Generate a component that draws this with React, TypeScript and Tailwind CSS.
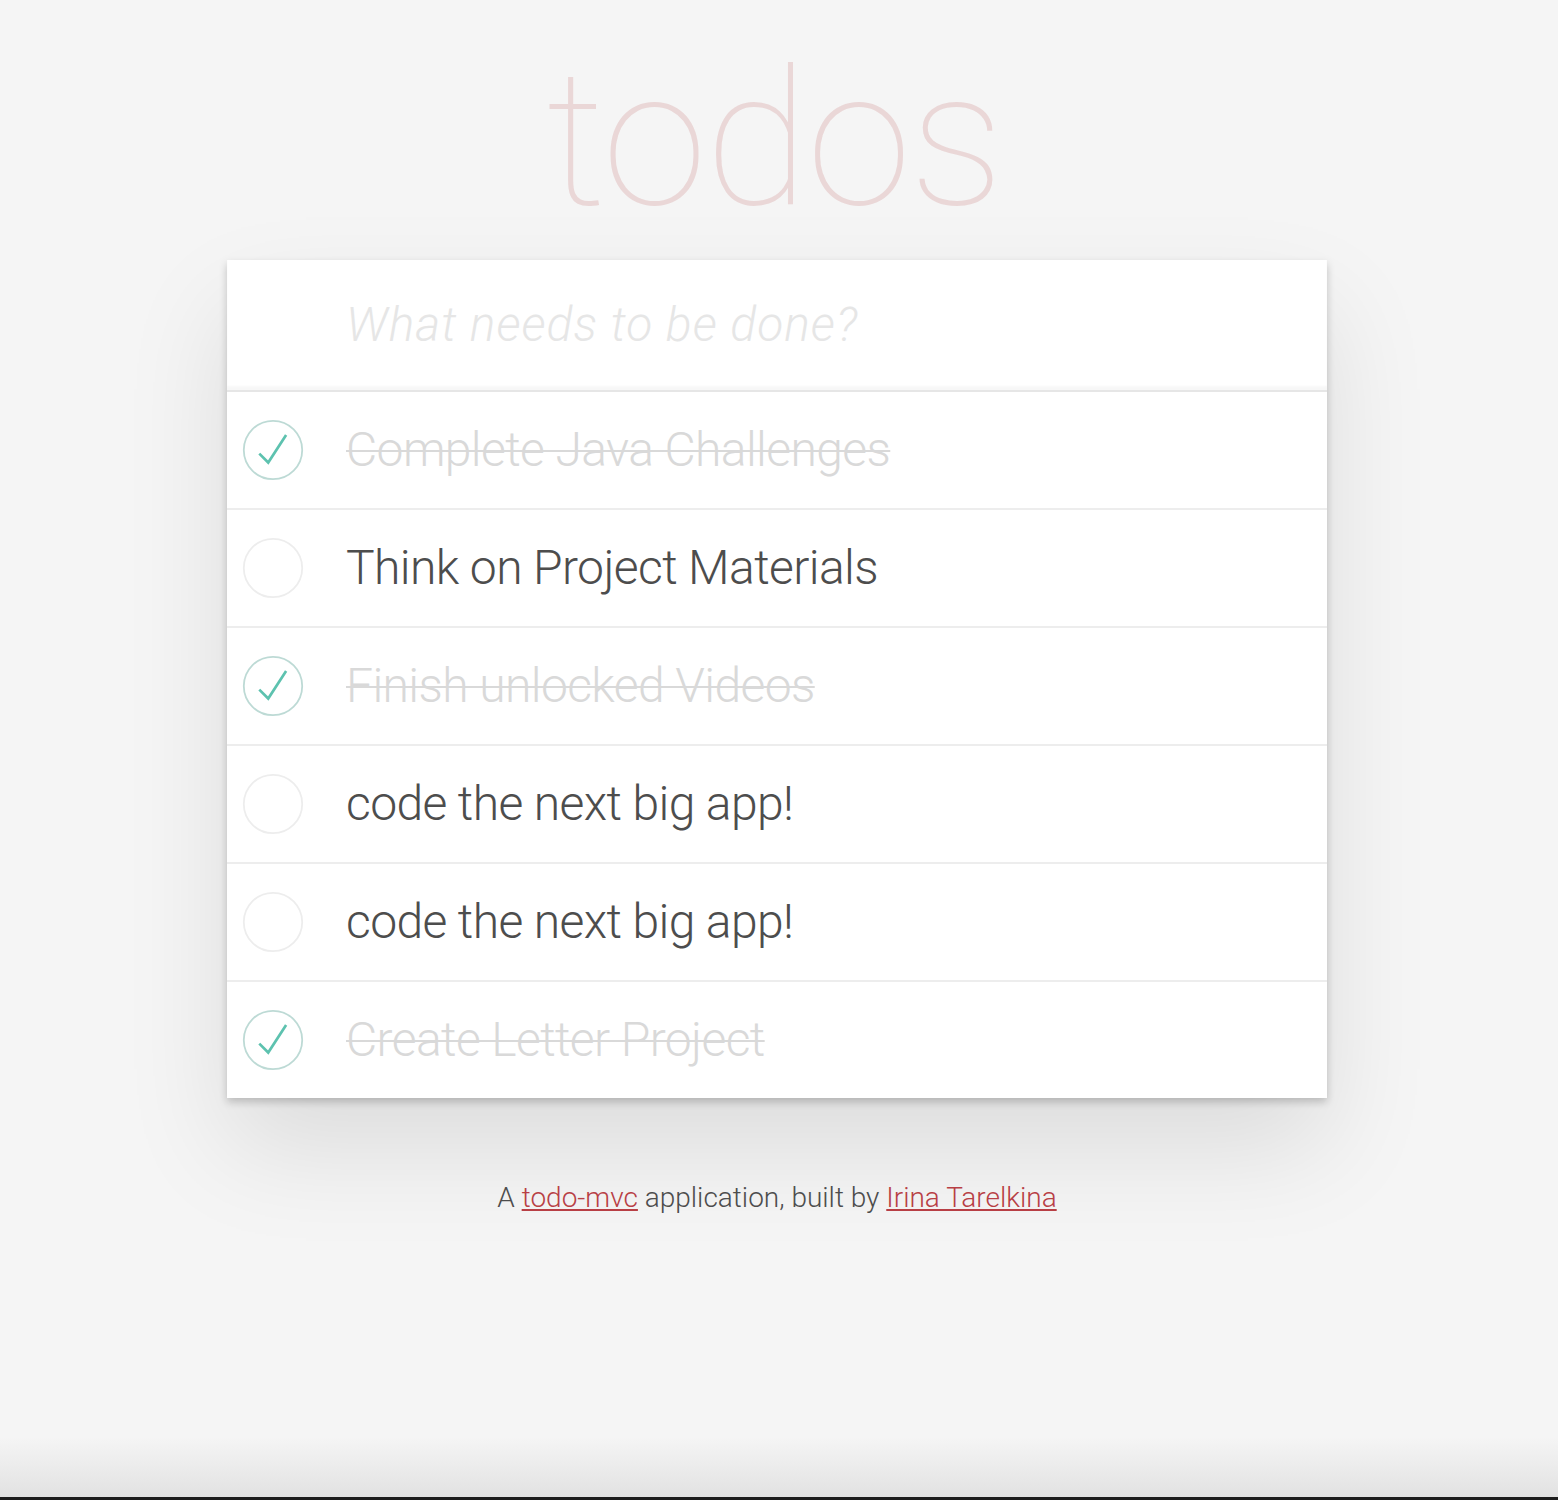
import React from 'react'

type Todo = { title: string; done: boolean }

const todos: Todo[] = [
    { title: 'Complete Java Challenges', done: true },
    { title: 'Think on Project Materials', done: false },
    { title: 'Finish unlocked Videos', done: true },
    { title: 'code the next big app!', done: false },
    { title: 'code the next big app!', done: false },
    { title: 'Create Letter Project', done: true },
]

function Toggle({ done }: { done: boolean }) {
    return (
        <svg width="62" height="62" viewBox="-2 -2 104 104" className="shrink-0">
            <circle cx="50" cy="50" r="49" fill="none" stroke={done ? '#bddad5' : '#ededed'} strokeWidth="3" />
            {done && <path d="M72 25 L42 71 27 56" fill="none" stroke="#5dc2af" strokeWidth="4.5" />}
        </svg>
    )
}

export default function App() {
    return (
        <div className="min-h-[1500px] bg-[#f5f5f5] flex flex-col font-['Roboto','Helvetica_Neue','Liberation_Sans',sans-serif] font-light text-[#4d4d4d]">
            <div className="flex flex-col items-center -ml-[4px]">
                {/* title */}
                <h1 className="mt-[44px] mb-[26px] text-[190px] leading-none font-thin text-[rgba(175,47,47,0.15)] tracking-[-2px] -ml-[6px]">
                    todos
                </h1>

                {/* card */}
                <div className="w-[1100px] bg-white shadow-[0_4px_8px_0_rgba(0,0,0,0.2),0_50px_100px_0_rgba(0,0,0,0.1)]">
                    <div className="h-[130px] shadow-[inset_0_-4px_2px_rgba(0,0,0,0.03)] flex items-center pl-[119px]">
                        <input
                            className="w-full bg-transparent outline-none text-[48px] font-light tracking-[1px] placeholder:italic placeholder:text-[#e6e6e6]"
                            placeholder="What needs to be done?"
                        />
                    </div>
                    <ul className="border-t-2 border-[#e6e6e6]">
                        {todos.map((t, i) => (
                            <li key={i} className="h-[118px] flex items-center border-b-2 border-[#ededed] last:border-b-0 last:h-[116px]">
                                <div className="w-[119px] pl-[15px] flex items-center">
                                    <Toggle done={t.done} />
                                </div>
                                <span className={t.done ? 'text-[48px] tracking-[-0.6px] text-[#d9d9d9] line-through decoration-2' : 'text-[48px] tracking-[-0.6px] text-[#4d4d4d]'}>
                                    {t.title}
                                </span>
                            </li>
                        ))}
                    </ul>
                </div>

                {/* footer */}
                <p className="mt-[86px] text-[28px] leading-[28px] text-[#4d4d4d]">
                    A <a href="#" className="text-[#b83f45] underline">todo-mvc</a> application, built by{' '}
                    <a href="#" className="text-[#b83f45] underline">Irina Tarelkina</a>
                </p>
            </div>

            <div className="flex-1" />
            <div className="w-full h-[60px] bg-gradient-to-b from-[#f5f5f5] to-[#e2e2e2]" />
            <div className="w-full h-[3px] bg-[#1e1e1e]" />
        </div>
    )
}
